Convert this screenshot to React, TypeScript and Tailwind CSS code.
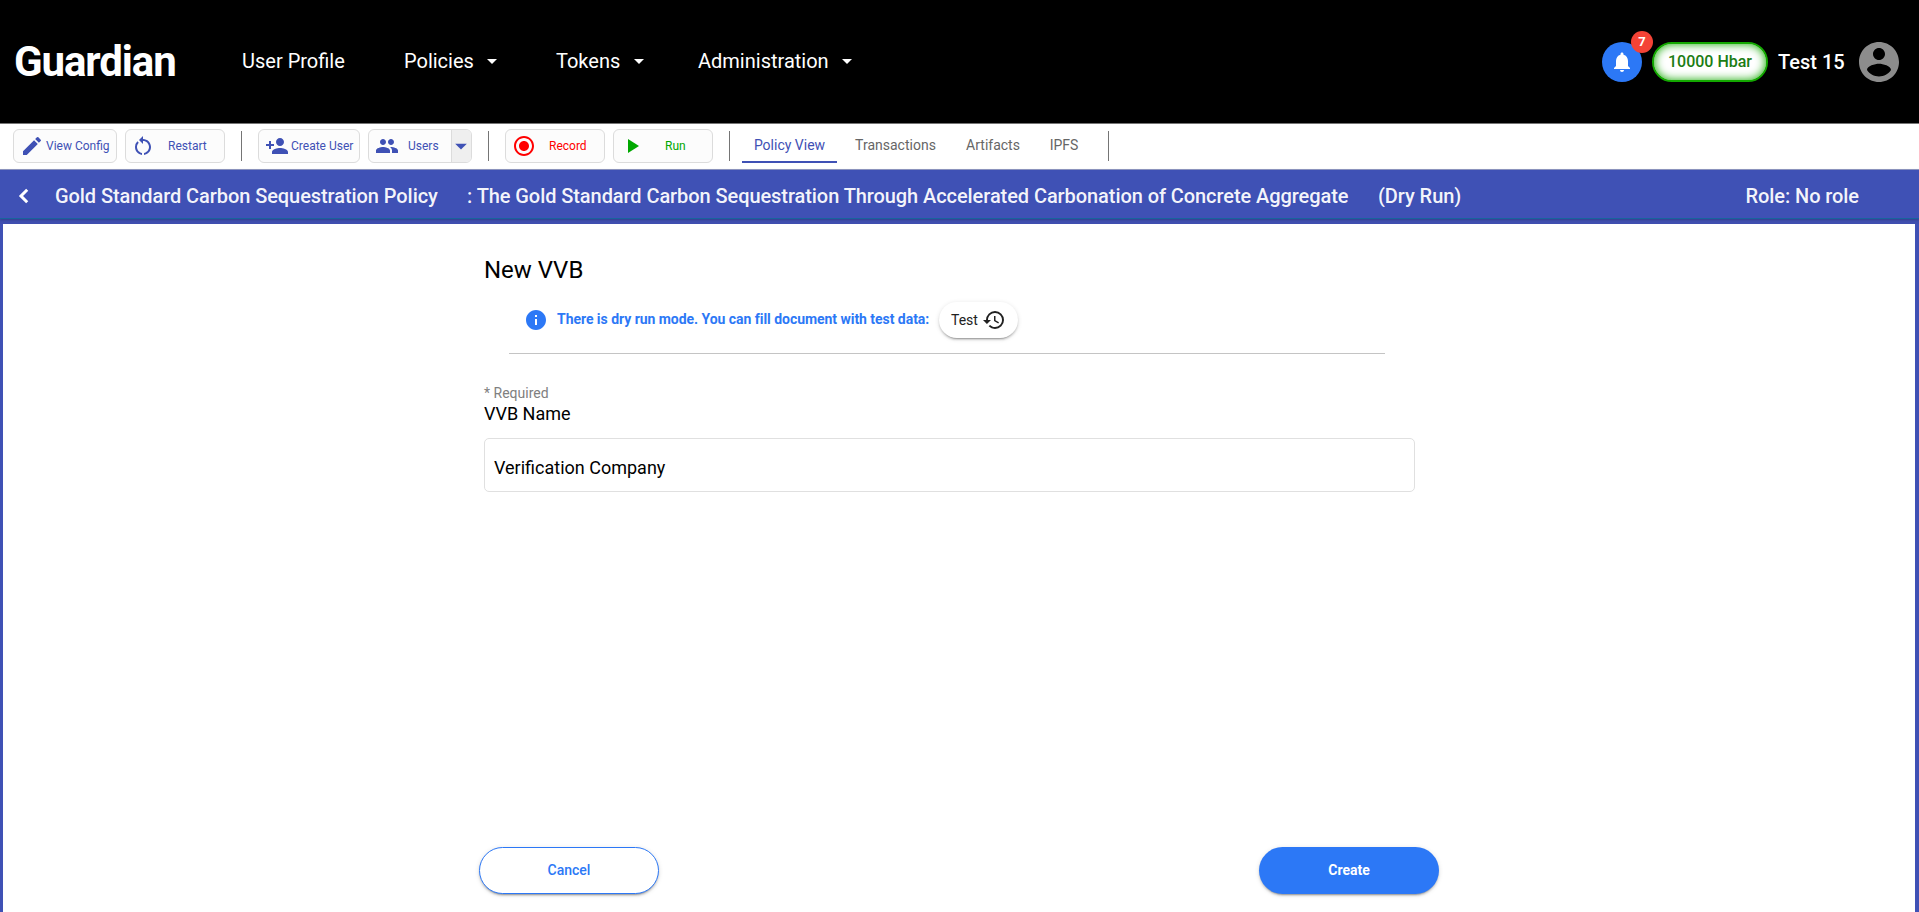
import React from 'react';
import {
  MdEdit, MdRestartAlt, MdPersonAdd, MdPeople, MdArrowDropDown, MdRadioButtonChecked,
  MdPlayArrow, MdNotifications, MdInfo, MdHistory,
} from 'react-icons/md';

function Divider({ className }: { className: string }) {
  return <div className={`h-[30px] w-px shrink-0 bg-[#757575] ${className}`} />;
}

function AccountIcon({ className }: { className: string }) {
  return (
    <svg viewBox="0 0 24 24" fill="currentColor" className={className}>
      <path d="M12 2C6.48 2 2 6.48 2 12s4.48 10 10 10 10-4.48 10-10S17.52 2 12 2zm0 3c1.66 0 3 1.34 3 3s-1.34 3-3 3-3-1.34-3-3 1.34-3 3-3zm0 14.2c-2.5 0-4.71-1.28-6-3.22.03-1.99 4-3.08 6-3.08 1.99 0 5.97 1.09 6 3.08-1.29 1.94-3.5 3.22-6 3.22z" />
    </svg>
  );
}

function BackIcon({ className }: { className: string }) {
  return (
    <svg viewBox="0 0 28 28" fill="none" stroke="currentColor" strokeWidth="3" className={className}>
      <path d="M18.2 7.8L12 14l6.2 6.2" />
    </svg>
  );
}

function ToolButton({ className, icon, iconBox, label }: {
  className: string; icon: React.ReactNode; iconBox: string; label: string;
}) {
  return (
    <button className={`flex h-[34px] shrink-0 items-center rounded-md border border-[#dcdcdc] bg-[#fcfcfc] text-xs ${className}`}>
      <span className={`flex shrink-0 ${iconBox}`}>{icon}</span>
      <span className="shrink-0 whitespace-nowrap">{label}</span>
    </button>
  );
}

function NavItem({ className, label, menu }: { className: string; label: string; menu?: boolean }) {
  return (
    <a className={`flex shrink-0 items-center whitespace-nowrap ${className}`}>
      <span>{label}</span>
      {menu && <MdArrowDropDown className="ml-auto size-6" />}
    </a>
  );
}

export default function App() {
  return (
    <div className="flex h-[912px] w-[1919px] flex-col overflow-hidden bg-white font-['Roboto',sans-serif] text-black">
      <header className="flex h-[124px] shrink-0 items-center border-b border-[#757575] bg-black pt-px text-white">
        <div className="ml-[14px] w-[228px] shrink-0 pb-0.5 text-[42px] font-bold tracking-[-1.1px]">Guardian</div>
        <nav className="flex pb-0.5 text-xl">
          <NavItem className="w-[162px]" label="User Profile" />
          <NavItem className="w-[100px]" label="Policies" menu />
          <NavItem className="ml-[52px] w-[95px]" label="Tokens" menu />
          <NavItem className="ml-[47px] w-[161px]" label="Administration" menu />
        </nav>
        <div className="ml-auto flex items-center pr-5">
          <div className="relative flex size-10 items-center justify-center rounded-full bg-[#2c78f6]">
            <MdNotifications className="size-6" />
            <span className="absolute -top-[11px] left-[29px] flex size-[22px] items-center justify-center rounded-full bg-[#f44336] text-[13px] font-bold">7</span>
          </div>
          <div className="ml-2.5 flex h-10 w-[116px] items-center justify-center rounded-full border-2 border-[#13a800] bg-white text-base font-medium text-[#1b7d14] shadow-[inset_0_0_10px_#13a800]">10000 Hbar</div>
          <div className="ml-2.5 w-[77px] whitespace-nowrap text-xl font-medium">Test 15</div>
          <AccountIcon className="-mr-1 size-12 text-[#8c8c8c]" />
        </div>
      </header>

      <div className="flex h-[45px] shrink-0 items-center pb-px pl-[13px] text-[#3f51b5]">
        <ToolButton className="w-[104px]" icon={<MdEdit className="size-6" />} iconBox="ml-[6px] w-[26px]" label="View Config" />
        <ToolButton className="ml-2 w-[100px]" icon={<MdRestartAlt className="size-6" />} iconBox="ml-[5px] w-[37px]" label="Restart" />
        <Divider className="ml-4" />
        <ToolButton className="ml-4 w-[102px]" icon={<MdPersonAdd className="size-6" />} iconBox="ml-[6px] w-[26px]" label="Create User" />
        <div className="ml-2 flex h-[34px] w-[104px] shrink-0 items-center overflow-hidden rounded-md border border-[#dcdcdc] bg-[#fcfcfc] text-xs">
          <MdPeople className="ml-[6px] size-6" />
          <span className="ml-[9px]">Users</span>
          <span className="ml-auto flex h-full w-5 items-center justify-center border-l border-[#dcdcdc] bg-[#efefef] pr-px">
            <MdArrowDropDown className="size-7 shrink-0" />
          </span>
        </div>
        <Divider className="ml-4" />
        <ToolButton className="ml-4 w-[100px] text-[#ff0000]" icon={<MdRadioButtonChecked className="size-6" />} iconBox="ml-[6px] w-[37px]" label="Record" />
        <ToolButton className="ml-2 w-[100px] text-[#00a800]" icon={<MdPlayArrow className="size-6" />} iconBox="ml-[6px] w-[45px]" label="Run" />
        <Divider className="ml-4" />
        <div className="ml-3 flex h-[34px] text-sm text-[#666666]">
          <span className="flex w-[95px] items-center justify-center border-b-2 border-[#3f51b5] text-[#3f51b5]">Policy View</span>
          <span className="flex w-[117px] items-center justify-center border-b-2 border-transparent">Transactions</span>
          <span className="flex w-[78px] items-center justify-center border-b-2 border-transparent">Artifacts</span>
          <span className="flex w-[64px] items-center justify-center border-b-2 border-transparent">IPFS</span>
        </div>
        <Divider className="ml-3" />
      </div>

      <div className="flex h-[55px] shrink-0 flex-col bg-[#3f4eaf]">
        <div className="flex h-[50px] items-center border-b border-t border-b-[#17659c] border-t-[#8b93bd] bg-[#3f51b5] pt-[3px] text-xl font-medium tracking-[-0.075px] text-white/95 shadow-[0_1px_2px_rgba(0,0,0,0.2)]">
          <BackIcon className="ml-[9px] size-7 text-white" />
          <span className="ml-[18px] h-[23px] w-[412px] overflow-hidden whitespace-nowrap leading-6">Gold Standard Carbon Sequestration Policy</span>
          <span className="h-[23px] w-[911px] overflow-hidden whitespace-nowrap leading-6">: The Gold Standard Carbon Sequestration Through Accelerated Carbonation of Concrete Aggregate</span>
          <span className="h-[23px] overflow-hidden whitespace-nowrap leading-6">(Dry Run)</span>
          <span className="ml-auto mr-[60px] h-[23px] whitespace-nowrap leading-6">Role: No role</span>
        </div>
      </div>

      <main className="flex flex-1 flex-col border-l-[3px] border-r-4 border-[#3f51b5] bg-white">
        <div className="ml-[476px] mt-[30px] flex w-[960px] flex-col">
          <h1 className="ml-[5px] text-2xl leading-8">New VVB</h1>
          <div className="ml-[30px] mt-[7px] flex h-[61px] w-[876px] items-start border-b border-[#c4c4c4] pl-[15px] pt-2">
            <MdInfo className="mt-[7px] size-6 text-[#2c78f6]" />
            <span className="ml-[9px] w-[382px] whitespace-nowrap text-sm font-bold leading-9 tracking-[-0.04px] text-[#2c78f6]">There is dry run mode. You can fill document with test data:</span>
            <button className="mt-px flex h-9 w-[79px] items-center rounded-full pb-px pl-3 text-sm text-[#212121] shadow-[0_3px_1px_-2px_rgba(0,0,0,.2),0_2px_2px_0_rgba(0,0,0,.14),0_1px_5px_0_rgba(0,0,0,.12)]">
              Test<MdHistory className="ml-1 size-6 shrink-0" />
            </button>
          </div>
          <div className="ml-[5px] mt-[29px] text-sm leading-5 text-[#808080]">* Required</div>
          <label className="ml-[5px] text-lg leading-[22px]">VVB Name</label>
          <div className="ml-[5px] mt-[13px] flex h-[54px] w-[931px] items-center rounded-[5px] border border-[#e0e0e0] pl-[9px] pt-[5px] text-lg">Verification Company</div>
        </div>
        <div className="mb-[18px] ml-[476px] mt-auto flex w-[960px] justify-between text-sm font-medium">
          <button className="h-[47px] w-[180px] rounded-full border border-[#2c78f6] bg-white pb-px text-[#2c78f6] shadow-[0_3px_1px_-2px_rgba(0,0,0,.2),0_2px_2px_0_rgba(0,0,0,.14),0_1px_5px_0_rgba(0,0,0,.12)]">Cancel</button>
          <button className="h-[47px] w-[180px] rounded-full bg-[#2c78f6] pb-px font-bold text-white shadow-[0_3px_1px_-2px_rgba(0,0,0,.2),0_2px_2px_0_rgba(0,0,0,.14),0_1px_5px_0_rgba(0,0,0,.12)]">Create</button>
        </div>
      </main>
    </div>
  );
}
